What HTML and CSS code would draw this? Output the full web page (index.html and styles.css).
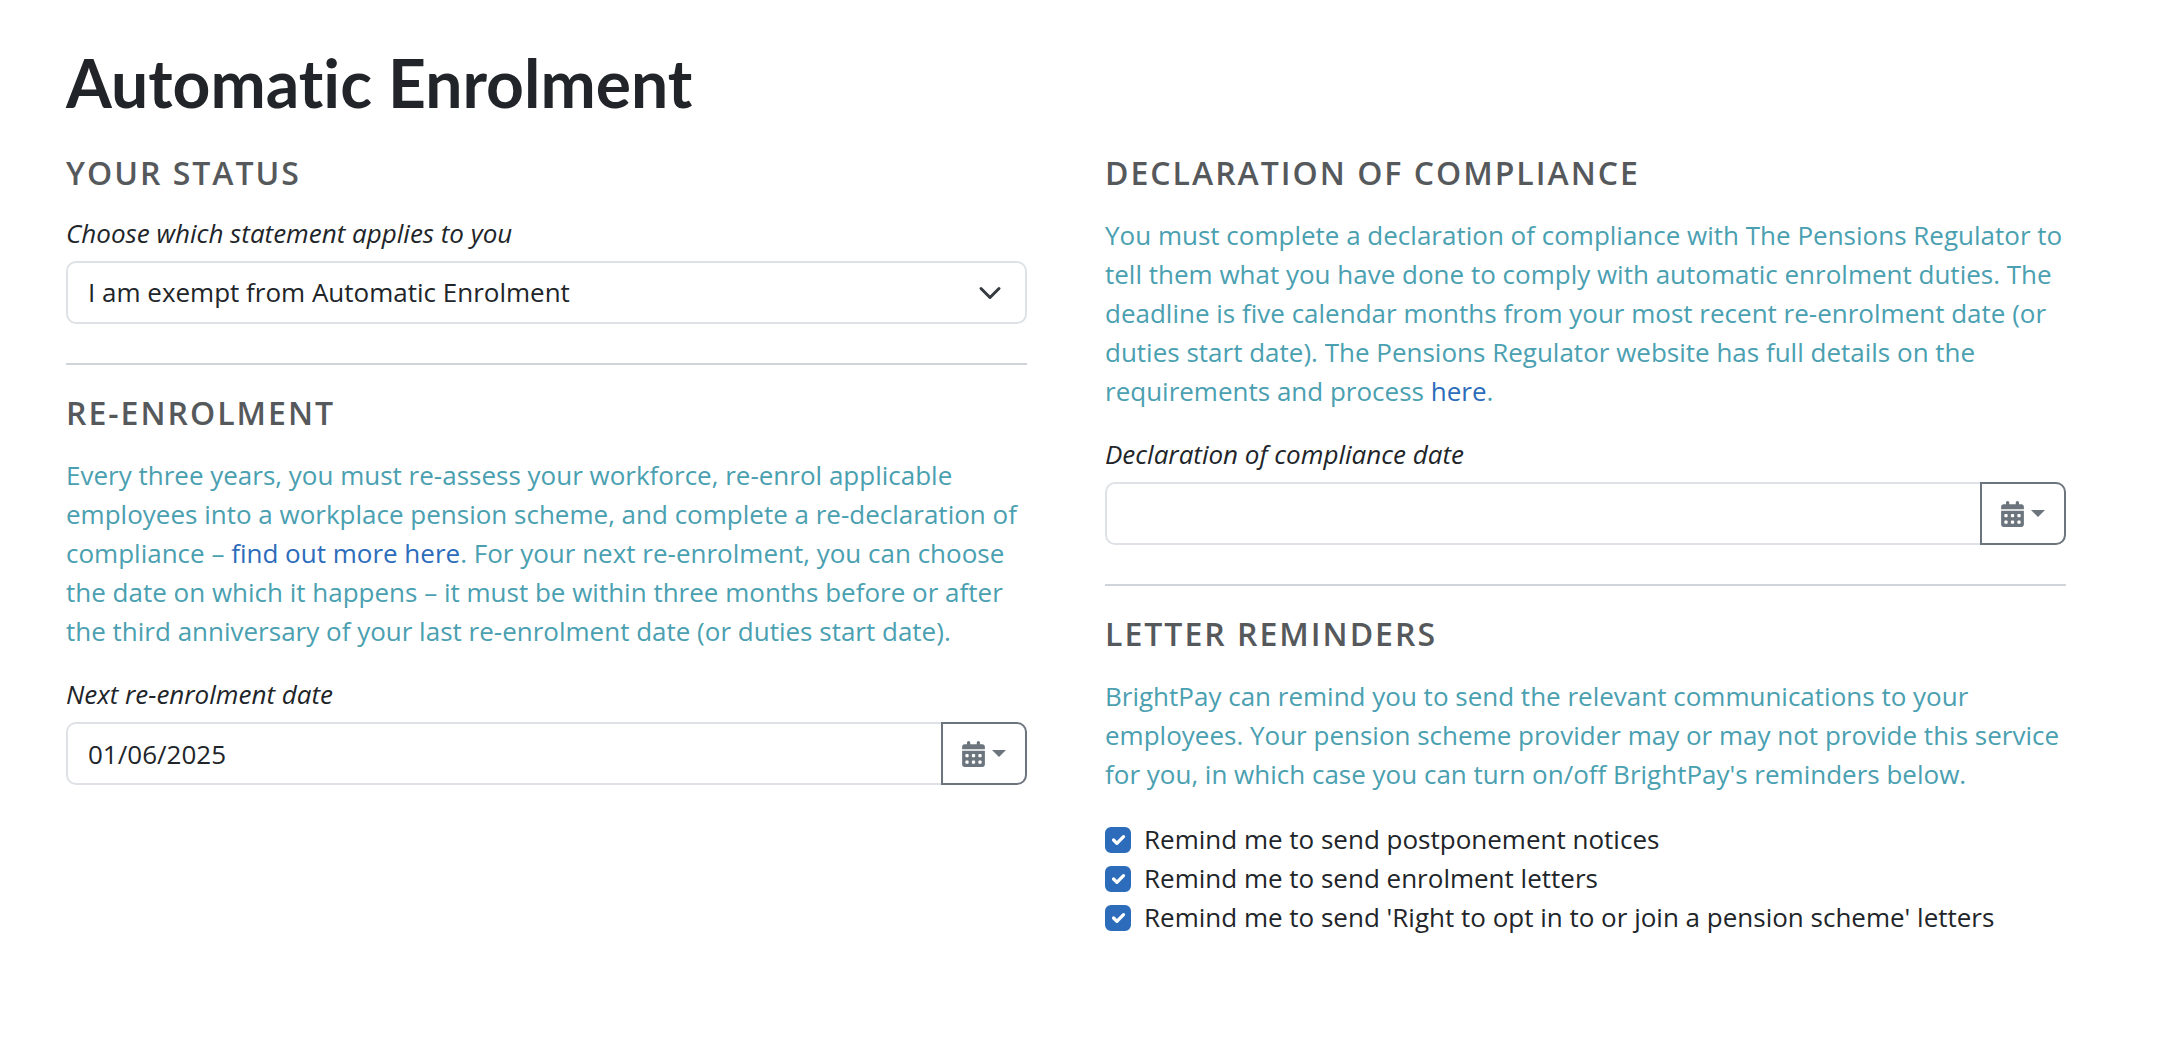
FILE: index.html
```html
<!DOCTYPE html>
<html lang="en">
<head>
<meta charset="utf-8">
<meta name="viewport" content="width=device-width, initial-scale=1">
<title>Automatic Enrolment</title>
<link rel="stylesheet" href="styles.css">
</head>
<body>
<svg class="sprite" aria-hidden="true">
  <symbol id="calendar" viewBox="0 0 448 512">
    <path d="M128 0c17.700 0 32 14.300 32 32V64H288V32c0-17.700 14.300-32 32-32s32 14.300 32 32V64h48c26.500 0 48 21.500 48 48v48H0V112C0 85.500 21.500 64 48 64H96V32c0-17.700 14.300-32 32-32zM0 192H448V464c0 26.500-21.500 48-48 48H48c-26.500 0-48-21.500-48-48V192zm64 80v32c0 8.800 7.200 16 16 16h32c8.800 0 16-7.200 16-16V272c0-8.800-7.200-16-16-16H80c-8.800 0-16 7.200-16 16zm128 0v32c0 8.800 7.200 16 16 16h32c8.800 0 16-7.200 16-16V272c0-8.800-7.200-16-16-16H208c-8.800 0-16 7.200-16 16zm144-16c-8.800 0-16 7.200-16 16v32c0 8.800 7.200 16 16 16h32c8.800 0 16-7.200 16-16V272c0-8.800-7.200-16-16-16H336zM64 400v32c0 8.800 7.200 16 16 16h32c8.800 0 16-7.200 16-16V400c0-8.800-7.200-16-16-16H80c-8.800 0-16 7.200-16 16zm144-16c-8.800 0-16 7.200-16 16v32c0 8.800 7.200 16 16 16h32c8.800 0 16-7.200 16-16V400c0-8.800-7.200-16-16-16H208zm112 16v32c0 8.800 7.200 16 16 16h32c8.800 0 16-7.200 16-16V400c0-8.800-7.200-16-16-16H336c-8.800 0-16 7.200-16 16z"/>
  </symbol>
</svg>
<main class="page">
  <h1 class="title">Automatic Enrolment</h1>
  <div class="columns">
    <div class="column">
      <section>
        <h2 class="heading">Your status</h2>
        <label class="label" for="status">Choose which statement applies to you</label>
        <select class="control select" id="status">
          <option>I am exempt from Automatic Enrolment</option>
        </select>
      </section>
      <hr class="rule">
      <section>
        <h2 class="heading">Re-enrolment</h2>
        <p class="info">Every three years, you must re-assess your workforce, re-enrol applicable employees into a workplace pension scheme, and complete a re-declaration of compliance – <a class="link" href="#">find out more here</a>. For your next re-enrolment, you can choose the date on which it happens – it must be within three months before or after the third anniversary of your last re-enrolment date (or duties start date).</p>
        <label class="label" for="next-date">Next re-enrolment date</label>
        <div class="group">
          <input class="control" id="next-date" type="text" value="01/06/2025">
          <button class="picker" type="button" aria-label="Choose date"><svg class="icon"><use href="#calendar"/></svg><span class="caret"></span></button>
        </div>
      </section>
    </div>
    <div class="column">
      <section>
        <h2 class="heading">Declaration of compliance</h2>
        <p class="info">You must complete a declaration of compliance with The Pensions Regulator to tell them what you have done to comply with automatic enrolment duties. The deadline is five calendar months from your most recent re-enrolment date (or duties start date). The Pensions Regulator website has full details on the requirements and process <a class="link" href="#">here</a>.</p>
        <label class="label" for="declaration-date">Declaration of compliance date</label>
        <div class="group">
          <input class="control" id="declaration-date" type="text">
          <button class="picker" type="button" aria-label="Choose date"><svg class="icon"><use href="#calendar"/></svg><span class="caret"></span></button>
        </div>
      </section>
      <hr class="rule">
      <section>
        <h2 class="heading">Letter reminders</h2>
        <p class="info">BrightPay can remind you to send the relevant communications to your employees. Your pension scheme provider may or may not provide this service for you, in which case you can turn on/off BrightPay's reminders below.</p>
        <label class="check"><input class="box" type="checkbox" checked>Remind me to send postponement notices</label>
        <label class="check"><input class="box" type="checkbox" checked>Remind me to send enrolment letters</label>
        <label class="check"><input class="box" type="checkbox" checked>Remind me to send 'Right to opt in to or join a pension scheme' letters</label>
      </section>
    </div>
  </div>
</main>
</body>
</html>
```
FILE: styles.css
```css
* {
  box-sizing: border-box;
}

body {
  margin: 0;
  background: #fff;
  color: #212529;
  font: 26px/39px "Open Sans", "Noto Sans", sans-serif;
}

.sprite {
  display: none;
}

.page {
  padding: 44px 112px 112px 66px;
}

.title {
  margin: 0 0 31px;
  font: 700 66px/78px Lato, "Open Sans", sans-serif;
  font-variant-ligatures: none;
}

.columns {
  display: grid;
  grid-template-columns: 1fr 1fr;
  gap: 78px;
}

.heading {
  margin: 0 0 23px;
  color: #56595c;
  font-size: 32px;
  font-weight: 600;
  line-height: 40px;
  letter-spacing: 2px;
  text-transform: uppercase;
}

.label {
  display: block;
  margin-bottom: 10px;
  font-style: italic;
  line-height: 35px;
}

.info {
  margin: 0 0 26px;
  color: #4aa0b0;
}

.link {
  color: #2c6cba;
  text-decoration: none;
}

.rule {
  margin: 39px 0 28px;
  border: 0;
  border-top: 2px solid #ced4da;
}

.control {
  display: block;
  width: 100%;
  height: 63px;
  padding: 0 20px;
  border: 2px solid #dee2e6;
  border-radius: 10px;
  background: #fff;
  color: inherit;
  font: inherit;
}

.select {
  appearance: none;
  background: #fff url("data:image/svg+xml,%3Csvg xmlns='http://www.w3.org/2000/svg' viewBox='0 0 16 16'%3E%3Cpath fill='none' stroke='%23343a40' stroke-linecap='round' stroke-linejoin='round' stroke-width='2' d='m2 5 6 6 6-6'/%3E%3C/svg%3E") no-repeat right 23px center / 24px 24px;
}

.group {
  display: flex;
}

.group .control {
  flex: 1;
  min-width: 0;
  border-right: 0;
  border-radius: 10px 0 0 10px;
}

.picker {
  display: flex;
  align-items: center;
  justify-content: center;
  gap: 7px;
  width: 86px;
  padding: 0;
  border: 2px solid #6c757d;
  border-radius: 0 10px 10px 0;
  background: #fff;
  color: #6c757d;
}

.icon {
  width: 23px;
  height: 26px;
  fill: currentColor;
}

.caret {
  border: 7px solid transparent;
  border-top-color: currentColor;
  border-bottom: 0;
}

.check {
  display: flex;
  align-items: center;
  gap: 13px;
}

.box {
  appearance: none;
  flex: none;
  width: 26px;
  height: 26px;
  margin: 0;
  border: 2px solid #dee2e6;
  border-radius: 6px;
}

.box:checked {
  border-color: #2c6cba;
  background: #2c6cba url("data:image/svg+xml,%3Csvg xmlns='http://www.w3.org/2000/svg' viewBox='0 0 20 20'%3E%3Cpath fill='none' stroke='%23fff' stroke-linecap='round' stroke-linejoin='round' stroke-width='3' d='m6 10 3 3 6-6'/%3E%3C/svg%3E") center / contain no-repeat;
}
```
